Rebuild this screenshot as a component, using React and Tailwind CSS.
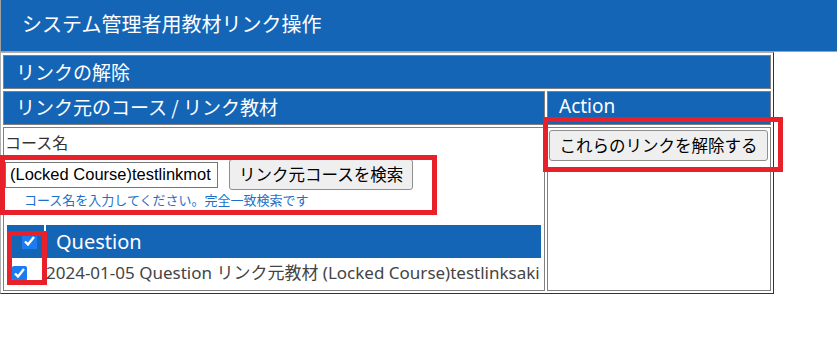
import React from 'react'

const jp = { fontFamily: '"Noto Sans CJK JP", "Noto Sans", sans-serif' }
const mixed = { fontFamily: '"Noto Sans", "Noto Sans CJK JP", sans-serif' }

function RedBox({ className }) {
  return <div className={`pointer-events-none absolute border-[5px] border-[#e8202a] ${className}`} />
}

export default function App() {
  return (
    <div className="relative h-[346px] w-[837px] bg-white" style={jp}>
      <div className="flex h-[52px] items-center border-b border-l border-[#a0a0a0] bg-[#1565b7] pb-[3px] pl-[21px] text-[20px] text-white">
        システム管理者用教材リンク操作
      </div>

      <table className="w-[774px] border-separate border-spacing-[2px] border border-t-[#b0b0b0] border-l-[#b0b0b0] border-r-[#333] border-b-[#333]">
        <tbody>
          <tr>
            <td colSpan={2} className="h-[34px] border border-[#808080] bg-[#1565b7] pb-[2px] pl-[12px] text-[19px] leading-none text-white">
              リンクの解除
            </td>
          </tr>
          <tr>
            <td className="h-[34px] w-[542px] border border-[#808080] bg-[#1565b7] pb-[3px] pl-[12px] text-[19px] leading-none text-white">
              リンク元のコース / リンク教材
            </td>
            <td className="h-[34px] border border-[#808080] bg-[#1565b7] pb-[4px] pl-[11px] text-[19px] leading-none text-white" style={mixed}>
              Action
            </td>
          </tr>
          <tr>
            <td className="h-[164px] border border-[#808080] p-[1px] align-top">
              <div className="text-[16px] leading-[26px] text-[#333]">コース名</div>
              <div className="mt-[4px] flex items-center gap-[11px]">
                <input
                  readOnly
                  value="(Locked Course)testlinkmot"
                  className="h-[26px] w-[213px] border border-[#767676] px-[4px] text-[16.5px] text-black"
                  style={{ fontFamily: '"Liberation Sans", Arial, sans-serif' }}
                />
                <button className="h-[31px] rounded-[3px] border border-[#8f8f8f] bg-[#efefef] px-[9px] text-[16.5px] text-black">
                  リンク元コースを検索
                </button>
              </div>
              <div className="mt-[1px] pl-[19px] text-[13px] leading-[17px] text-[#1e6fc9]">
                コース名を入力してください。完全一致検索です
              </div>
              <table className="mt-[15px] w-full border-separate border-spacing-[2px]">
                <tbody>
                  <tr>
                    <td className="h-[33px] w-[37px] bg-[#1565b7] pl-[15px] align-middle">
                      <input type="checkbox" defaultChecked className="block h-[15px] w-[15px] accent-[#1a7cf0]" />
                    </td>
                    <td className="h-[33px] bg-[#1565b7] pl-[10px] text-[20px] leading-none text-white" style={mixed}>
                      Question
                    </td>
                  </tr>
                  <tr>
                    <td className="h-[26px] pl-[5px] align-middle">
                      <input type="checkbox" defaultChecked className="block h-[15px] w-[15px] accent-[#1a7cf0]" />
                    </td>
                    <td className="whitespace-nowrap pl-0 text-[17px] leading-[22px] text-[#444]" style={mixed}>
                      2024-01-05 Question リンク元教材 (Locked Course)testlinksaki
                    </td>
                  </tr>
                </tbody>
              </table>
            </td>
            <td className="h-[164px] border border-[#808080] p-[1px] align-top">
              <button className="mt-[1px] h-[31px] w-[219px] rounded-[3px] border border-[#8f8f8f] bg-[#efefef] text-[16.5px] text-black">
                これらのリンクを解除する
              </button>
            </td>
          </tr>
        </tbody>
      </table>

      <RedBox className="left-0 top-[155px] h-[60px] w-[437px]" />
      <RedBox className="left-[543px] top-[117px] h-[55px] w-[240px]" />
      <RedBox className="left-[7px] top-[231px] h-[54px] w-[40px]" />
    </div>
  )
}
